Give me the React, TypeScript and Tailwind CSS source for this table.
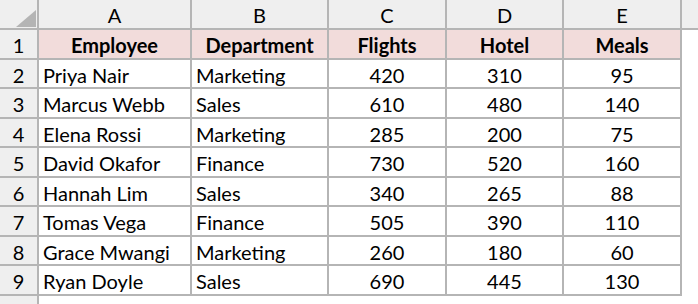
import React from "react";

const rows: [string, string, number, number, number][] = [
  ["Priya Nair", "Marketing", 420, 310, 95],
  ["Marcus Webb", "Sales", 610, 480, 140],
  ["Elena Rossi", "Marketing", 285, 200, 75],
  ["David Okafor", "Finance", 730, 520, 160],
  ["Hannah Lim", "Sales", 340, 265, 88],
  ["Tomas Vega", "Finance", 505, 390, 110],
  ["Grace Mwangi", "Marketing", 260, 180, 60],
  ["Ryan Doyle", "Sales", 690, 445, 130],
];

const cols = "grid grid-cols-[39px_153px_137px_118px_117px_118px_1fr]";

export default function App() {
  const heights = ["h-[29px]", "h-[30px]"];
  return (
    <div className="w-[698px] h-[304px] overflow-hidden bg-white text-[20px] text-black font-['Lato','Noto_Sans',sans-serif] leading-none">
      {/* Column header */}
      <div className={`${cols} h-[30px] bg-[#efefef] border-b-2 border-[#b5b5b5]`}>
        <div className="relative border-r-2 border-[#b5b5b5]">
          <svg className="absolute left-[16px] top-[10px]" width="20" height="17" viewBox="0 0 20 17">
            <polygon points="20,0 20,17 0,17" fill="#b4b4b4" />
          </svg>
        </div>
        {["A", "B", "C", "D", "E"].map((c) => (
          <div key={c} className="flex items-center justify-center pt-[2px] border-r-2 border-[#b5b5b5]">
            {c}
          </div>
        ))}
        <div />
      </div>
      {/* Row 1 header */}
      <div className={`${cols} h-[30px]`}>
        <div className="flex items-center justify-center pt-[2px] bg-[#efefef] border-r-2 border-b-2 border-[#b5b5b5]">1</div>
        <div className="flex items-center justify-center pt-[2px] font-bold bg-[#f2dcdb] border-r-2 border-b-2 border-[#b5b5b5]">Employee</div>
        <div className="flex items-center justify-center pt-[2px] font-bold bg-[#f2dcdb] border-r-2 border-b-2 border-[#b5b5b5]">Department</div>
        <div className="flex items-center justify-center pt-[2px] font-bold bg-[#f2dcdb] border-r-2 border-b-2 border-[#b5b5b5]">Flights</div>
        <div className="flex items-center justify-center pt-[2px] font-bold bg-[#f2dcdb] border-r-2 border-b-2 border-[#b5b5b5]">Hotel</div>
        <div className="flex items-center justify-center pt-[2px] font-bold bg-[#f2dcdb] border-r-2 border-b-2 border-[#b5b5b5]">Meals</div>
        <div />
      </div>
      {rows.map((r, i) => (
        <div key={i} className={`${cols} ${heights[i % 2]}`}>
          <div className="flex items-center justify-center pt-[2px] bg-[#efefef] border-r-2 border-b-2 border-[#b5b5b5]">{i + 2}</div>
          <div className="flex items-center pt-[2px] pl-[4px] border-r-2 border-b-2 border-[#b5b5b5]">{r[0]}</div>
          <div className="flex items-center pt-[2px] pl-[4px] border-r-2 border-b-2 border-[#b5b5b5]">{r[1]}</div>
          <div className="flex items-center justify-center pt-[2px] border-r-2 border-b-2 border-[#b5b5b5]">{r[2]}</div>
          <div className="flex items-center justify-center pt-[2px] border-r-2 border-b-2 border-[#b5b5b5]">{r[3]}</div>
          <div className="flex items-center justify-center pt-[2px] border-r-2 border-b-2 border-[#b5b5b5]">{r[4]}</div>
          <div />
        </div>
      ))}
      <div className={`${cols} h-[30px]`}>
        <div className="bg-[#efefef] border-r-2 border-[#b5b5b5]" />
      </div>
    </div>
  );
}
